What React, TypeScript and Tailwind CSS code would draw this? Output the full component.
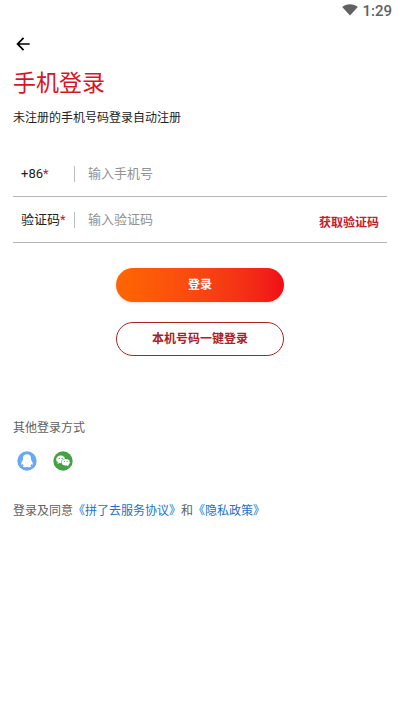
import React, { useState } from 'react';

const StatusBar: React.FC = () => (
  <div className="flex h-6 items-start justify-end gap-1 pr-2 text-[#616161]">
    <svg className="mt-1 h-3 w-4" viewBox="0 0 16 12" fill="currentColor" aria-hidden="true">
      <path d="M8 11.600 0.200 3C2.400 1 5 .2 8 .2S13.600 1 15.800 3z" />
    </svg>
    <span className="font-[Roboto,sans-serif] text-[15px]/[22px] font-medium">1:29</span>
  </div>
);

const BackIcon: React.FC = () => (
  <svg className="h-5 w-5" viewBox="0 0 24 24" fill="currentColor" aria-hidden="true">
    <path d="M20 11H7.830l5.590-5.590L12 4l-8 8 8 8 1.410-1.410L7.830 13H20z" />
  </svg>
);

const QQIcon: React.FC = () => (
  <svg className="h-5 w-5" viewBox="0 0 20 20" aria-hidden="true">
    <circle cx="10" cy="10" r="9.700" fill="#69a9f1" />
    <path
      fill="#fff"
      d="M10 3.200c-2.500 0-4 1.700-4 3.900v1.600c-.9 1.300-1.800 2.800-1.800 4.300 0 1 .6 1.100 1.500-.1.200.7.600 1.200 1.100 1.700-.8.300-1 .7-.8 1.100.3.700 3.200.6 4 0 .8.600 3.700.7 4 0 .2-.4 0-.8-.8-1.100.5-.5.900-1 1.100-1.700.9 1.200 1.500 1.100 1.500.1 0-1.500-.9-3-1.800-4.300V7.100c0-2.200-1.500-3.900-4-3.900z"
    />
  </svg>
);

const WechatIcon: React.FC = () => (
  <svg className="h-5 w-5" viewBox="0 0 20 20" aria-hidden="true">
    <circle cx="10" cy="10" r="9.700" fill="#45a244" />
    <path fill="#fff" d="M4.800 11.200 4.500 13l2-1z" />
    <ellipse cx="7.700" cy="8.400" rx="4.500" ry="3.800" fill="#fff" />
    <ellipse cx="12.700" cy="11.300" rx="4.500" ry="3.800" fill="#45a244" />
    <ellipse cx="12.700" cy="11.300" rx="4" ry="3.300" fill="#fff" />
    <path fill="#fff" d="m13.500 14.200 2 1-.3-2z" />
    <g fill="#45a244">
      <circle cx="6.300" cy="7.400" r=".6" />
      <circle cx="9.200" cy="7.400" r=".6" />
      <circle cx="11.400" cy="10.500" r=".5" />
      <circle cx="14" cy="10.500" r=".5" />
    </g>
  </svg>
);

interface FieldProps {
  id: string;
  label: string;
  placeholder: string;
  value: string;
  onChange: (value: string) => void;
  children?: React.ReactNode;
}

const Field: React.FC<FieldProps> = ({ id, label, placeholder, value, onChange, children }) => (
  <div className="flex h-[46px] items-center border-b border-[#b5b5b5] px-2 text-[13px]">
    <label htmlFor={id} className="w-[53px] shrink-0 text-[#222222]">
      {label}
      <span className="text-[#c4202c]">*</span>
    </label>
    <span className="h-4 w-px shrink-0 bg-[#bdbdbd]" />
    <input
      id={id}
      type="tel"
      placeholder={placeholder}
      value={value}
      onChange={(e) => onChange(e.target.value)}
      className="ml-[13px] min-w-0 flex-1 bg-transparent outline-none placeholder:text-[#929292]"
    />
    {children}
  </div>
);

export default function App() {
  const [phone, setPhone] = useState('');
  const [code, setCode] = useState('');

  return (
    <div className="min-h-screen bg-white font-[Roboto,'Noto_Sans_CJK_SC',sans-serif] text-xs text-[#222222]">
      <StatusBar />
      <main className="px-[13px]">
        <button type="button" aria-label="返回" className="mt-2.5 block text-black">
          <BackIcon />
        </button>
        <h1 className="mt-3 text-[23px]/9 text-[#d8161f]">手机登录</h1>
        <p className="mt-2 leading-4">未注册的手机号码登录自动注册</p>

        <form onSubmit={(e) => e.preventDefault()}>
          <div className="mt-[25px]">
            <Field id="phone" label="+86" placeholder="输入手机号" value={phone} onChange={setPhone} />
            <Field id="code" label="验证码" placeholder="输入验证码" value={code} onChange={setCode}>
              <button type="button" className="mt-1.5 text-xs font-bold text-[#c0202f]">
                获取验证码
              </button>
            </Field>
          </div>
          <div className="mt-[25px] flex flex-col items-center gap-5">
            <button
              type="submit"
              className="h-[34px] w-[168px] rounded-full bg-linear-to-r from-[#ff6600] to-[#f00b18] font-bold text-white shadow-sm"
            >
              登录
            </button>
            <button
              type="button"
              className="h-[34px] w-[168px] rounded-full border border-[#a8231f] font-bold text-[#a8231f]"
            >
              本机号码一键登录
            </button>
          </div>
        </form>

        <section className="mt-16 text-[#606060]">
          <h2 className="leading-4">其他登录方式</h2>
          <div className="mt-[15px] flex gap-4 pl-1">
            <button type="button" aria-label="QQ">
              <QQIcon />
            </button>
            <button type="button" aria-label="微信">
              <WechatIcon />
            </button>
          </div>
          <p className="mt-8 leading-4">
            登录及同意
            <a href="#terms" className="text-[#1b72c8]">《拼了去服务协议》</a>
            和
            <a href="#privacy" className="text-[#1b72c8]">《隐私政策》</a>
          </p>
        </section>
      </main>
    </div>
  );
}
